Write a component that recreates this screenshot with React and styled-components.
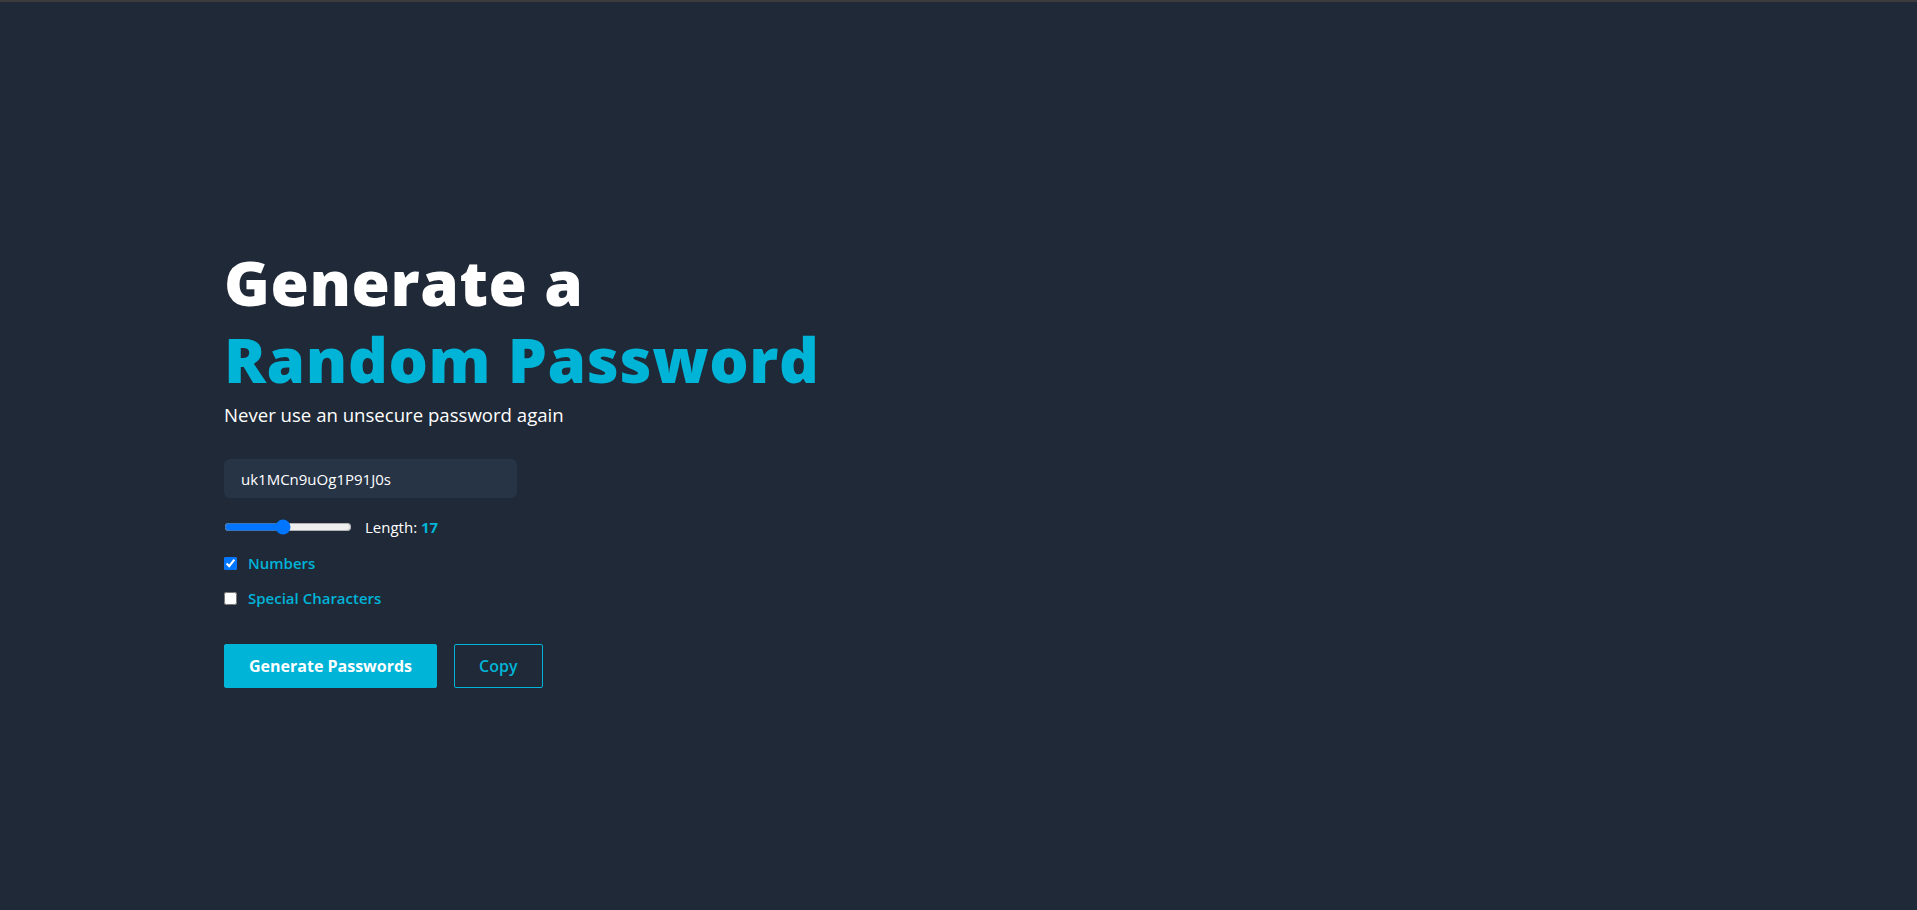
import React, { useState } from "react";
import styled, { createGlobalStyle } from "styled-components";

const GlobalStyle = createGlobalStyle`
  body {
    margin: 0;
    background: #1f2937;
    font-family: "Open Sans", "Noto Sans", sans-serif;
  }
`;

const Page = styled.main`
  min-height: 100vh;
  box-sizing: border-box;
  border-top: 2px solid #3c3c3c;
  padding: 242px 0 0 224px;
  background: #1f2937;
  color: #ffffff;
`;

const Title = styled.h1`
  margin: 0;
  font-size: 62px;
  line-height: 77px;
  font-weight: 800;
  letter-spacing: 0.6px;
  color: #ffffff;
`;

const Accent = styled.span`
  display: block;
  color: #00b4d8;
`;

const Subtitle = styled.p`
  margin: 5px 0 0;
  font-size: 18.6px;
  line-height: 24px;
`;

const PasswordBox = styled.input`
  display: block;
  margin-top: 32px;
  width: 293px;
  height: 39px;
  box-sizing: border-box;
  padding: 0 17px;
  border: none;
  border-radius: 6px;
  background: #273446;
  color: #ffffff;
  font-family: inherit;
  font-size: 15px;
  outline: none;
`;

const Row = styled.div`
  display: flex;
  align-items: center;
  height: 24px;
  margin-top: ${(p) => p.$gap}px;
`;

const Slider = styled.input`
  width: 128px;
  margin: 0;
`;

const LengthLabel = styled.span`
  margin-left: 13px;
  font-size: 15px;
`;

const Value = styled.b`
  color: #00b4d8;
`;

const Check = styled.input`
  width: 13px;
  height: 13px;
  margin: 0;
`;

const CheckLabel = styled.label`
  margin-left: 11px;
  font-size: 15px;
  font-weight: 600;
  color: #00b4d8;
`;

const Actions = styled.div`
  display: flex;
  gap: 17px;
  margin-top: 34px;
`;

const Button = styled.button`
  height: 44px;
  box-sizing: border-box;
  padding: 0 24px;
  border: 1px solid #00b4d8;
  border-radius: 2px;
  background: ${(p) => (p.$outline ? "transparent" : "#00b4d8")};
  color: ${(p) => (p.$outline ? "#00b4d8" : "#ffffff")};
  font-family: inherit;
  font-size: 16px;
  font-weight: ${(p) => (p.$outline ? 600 : 700)};
  cursor: pointer;
`;

export default function App() {
  const [length, setLength] = useState(17);
  const [numbers, setNumbers] = useState(true);
  const [special, setSpecial] = useState(false);

  return (
    <>
      <GlobalStyle />
      <Page>
        <Title>
          Generate a<Accent>Random Password</Accent>
        </Title>
        <Subtitle>Never use an unsecure password again</Subtitle>
        <PasswordBox readOnly value="uk1MCn9uOg1P91J0s" />
        <Row $gap={17}>
          <Slider
            type="range"
            min="6"
            max="30"
            value={length}
            onChange={(e) => setLength(Number(e.target.value))}
          />
          <LengthLabel>
            Length: <Value>{length}</Value>
          </LengthLabel>
        </Row>
        <Row $gap={12}>
          <Check
            id="numbers"
            type="checkbox"
            checked={numbers}
            onChange={(e) => setNumbers(e.target.checked)}
          />
          <CheckLabel htmlFor="numbers">Numbers</CheckLabel>
        </Row>
        <Row $gap={11}>
          <Check
            id="special"
            type="checkbox"
            checked={special}
            onChange={(e) => setSpecial(e.target.checked)}
          />
          <CheckLabel htmlFor="special">Special Characters</CheckLabel>
        </Row>
        <Actions>
          <Button>Generate Passwords</Button>
          <Button $outline>Copy</Button>
        </Actions>
      </Page>
    </>
  );
}
